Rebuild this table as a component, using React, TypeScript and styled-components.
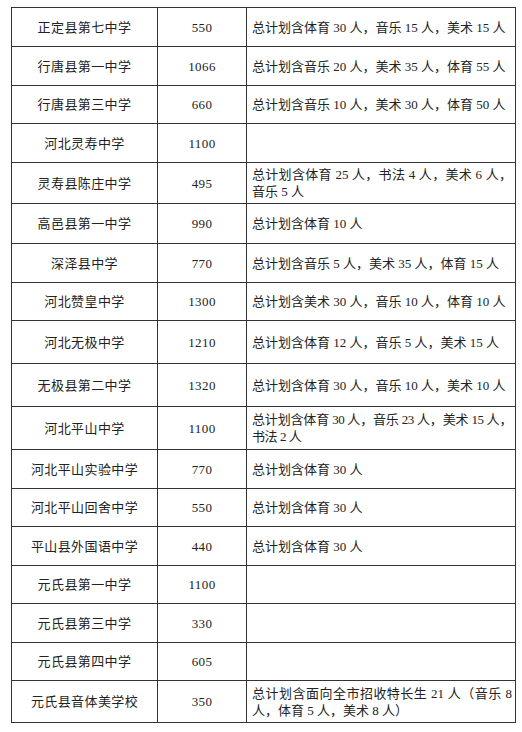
import styled, { createGlobalStyle } from "styled-components";

const GlobalStyle = createGlobalStyle`
  html, body {
    margin: 0;
    padding: 0;
    background: #fff;
  }
  body {
    font-family: "Liberation Serif", "Noto Sans CJK SC", serif;
    color: #222;
  }
`;

const Page = styled.div`
  padding: 7px 0 0 11px;
`;

const Table = styled.table`
  border-collapse: collapse;
  table-layout: fixed;
  width: 504px;
  font-size: 13px;
  color: #222;
`;

const Td = styled.td`
  border: 1px solid #333;
  padding: 0 4px;
  text-align: center;
  vertical-align: middle;
  line-height: 17px;
  letter-spacing: 0.4px;
`;

const NoteTd = styled(Td)<{ $tight?: boolean }>`
  padding: 0 3px 0 5px;
  text-align: justify;
  letter-spacing: ${({ $tight }) => ($tight ? "-0.45px" : "0")};
`;

const Row = styled.tr<{ $h: number }>`
  height: ${({ $h }) => $h}px;
`;

type School = { name: string; plan: string; note: string; h: number; tight?: boolean };

const schools: School[] = [
  { name: "正定县第七中学", plan: "550", note: "总计划含体育 30 人，音乐 15 人，美术 15 人", h: 39 },
  { name: "行唐县第一中学", plan: "1066", note: "总计划含音乐 20 人，美术 35 人，体育 55 人", h: 39 },
  { name: "行唐县第三中学", plan: "660", note: "总计划含音乐 10 人，美术 30 人，体育 50 人", h: 38 },
  { name: "河北灵寿中学", plan: "1100", note: "", h: 39 },
  { name: "灵寿县陈庄中学", plan: "495", note: "总计划含体育 25 人，书法 4 人，美术 6 人，音乐 5 人", h: 41 },
  { name: "高邑县第一中学", plan: "990", note: "总计划含体育 10 人", h: 40 },
  { name: "深泽县中学", plan: "770", note: "总计划含音乐 5 人，美术 35 人，体育 15 人", h: 39 },
  { name: "河北赞皇中学", plan: "1300", note: "总计划含美术 30 人，音乐 10 人，体育 10 人", h: 38 },
  { name: "河北无极中学", plan: "1210", note: "总计划含体育 12 人，音乐 5 人，美术 15 人", h: 43 },
  { name: "无极县第二中学", plan: "1320", note: "总计划含体育 30 人，音乐 10 人，美术 10 人", h: 43 },
  { name: "河北平山中学", plan: "1100", note: "总计划含体育 30 人，音乐 23 人，美术 15 人，书法 2 人", h: 43, tight: true },
  { name: "河北平山实验中学", plan: "770", note: "总计划含体育 30 人", h: 39 },
  { name: "河北平山回舍中学", plan: "550", note: "总计划含体育 30 人", h: 38 },
  { name: "平山县外国语中学", plan: "440", note: "总计划含体育 30 人", h: 39 },
  { name: "元氏县第一中学", plan: "1100", note: "", h: 38 },
  { name: "元氏县第三中学", plan: "330", note: "", h: 39 },
  { name: "元氏县第四中学", plan: "605", note: "", h: 38 },
  { name: "元氏县音体美学校", plan: "350", note: "总计划含面向全市招收特长生 21 人（音乐 8 人，体育 5 人，美术 8 人）", h: 42 },
];

const App = () => (
  <Page>
    <GlobalStyle />
    <Table>
      <colgroup>
        <col style={{ width: 146 }} />
        <col style={{ width: 89 }} />
        <col style={{ width: 269 }} />
      </colgroup>
      <tbody>
        {schools.map((s) => (
          <Row key={s.name} $h={s.h}>
            <Td>{s.name}</Td>
            <Td>{s.plan}</Td>
            <NoteTd $tight={s.tight}>{s.note}</NoteTd>
          </Row>
        ))}
      </tbody>
    </Table>
  </Page>
);

export default App;
